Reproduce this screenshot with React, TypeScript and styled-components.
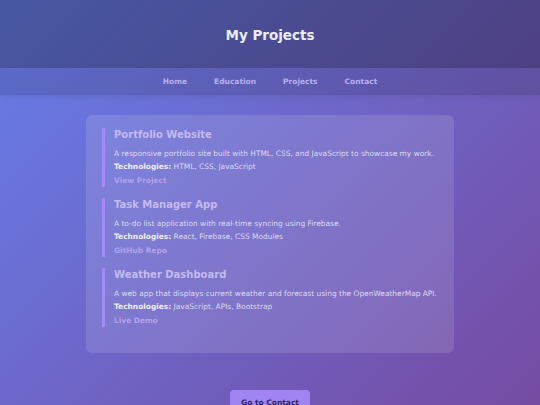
import React from "react";
import styled, { createGlobalStyle } from "styled-components";

const GlobalStyle = createGlobalStyle`
  html, body { margin: 0; padding: 0; }
  body {
    min-height: 405px;
    font-family: "DejaVu Sans", Verdana, sans-serif;
    background: linear-gradient(135deg, #667eea 0%, #764ba2 100%);
    background-attachment: fixed;
    overflow: hidden;
  }
`;

const Page = styled.div`
  width: 540px;
  display: flex;
  flex-direction: column;
`;

const Header = styled.header`
  flex-shrink: 0;
  height: 68px;
  background: rgba(0, 0, 0, 0.3);
  display: flex;
  align-items: center;
  justify-content: center;
`;

const Title = styled.h1`
  margin: 0;
  padding-top: 1px;
  font-size: 13.5px;
  font-weight: 700;
  color: #ececf8;
`;

const Nav = styled.nav`
  flex-shrink: 0;
  height: 27px;
  background: rgba(0, 0, 0, 0.13);
  box-shadow: 0 2px 6px rgba(0, 0, 0, 0.08);
  display: flex;
  align-items: center;
  justify-content: center;
  gap: 27px;
`;

const NavLink = styled.a`
  font-size: 7.5px;
  font-weight: 700;
  color: #b7b0f0;
  text-decoration: none;
`;

const Main = styled.main`
  display: flex;
  flex-direction: column;
  align-items: center;
  padding-top: 20px;
`;

const Card = styled.section`
  width: 368px;
  box-sizing: border-box;
  padding: 13px 10px 15px 16px;
  border-radius: 6px;
  background: rgba(255, 255, 255, 0.12);
`;

const Item = styled.article`
  border-left: 3px solid #a48af4;
  padding-left: 9px;
  margin-bottom: 11px;
`;

const ItemTitle = styled.h2`
  margin: 0;
  font-size: 10px;
  line-height: 13px;
  font-weight: 700;
  color: #c4baf2;
`;

const Text = styled.p`
  margin: 0;
  font-size: 7.45px;
  line-height: 13px;
  color: #dcdaf2;
  white-space: nowrap;
  & strong { color: #f0eefa; }
`;

const Desc = styled(Text)`
  margin-top: 6px;
`;

const ItemLink = styled.a`
  display: block;
  font-size: 7.45px;
  line-height: 13px;
  font-weight: 700;
  color: #b4a2ea;
  text-decoration: none;
  margin-top: 1px;
`;

const Button = styled.button`
  margin-top: 37px;
  width: 80px;
  height: 22px;
  border: none;
  border-radius: 4px;
  background: #a084f2;
  color: #2c2468;
  font-family: "DejaVu Sans", Verdana, sans-serif;
  font-size: 7.5px;
  font-weight: 700;
  display: flex;
  align-items: center;
  justify-content: center;
  padding: 0;
  padding-top: 2px;
`;

const projects = [
  {
    title: "Portfolio Website",
    desc: "A responsive portfolio site built with HTML, CSS, and JavaScript to showcase my work.",
    tech: "HTML, CSS, JavaScript",
    link: "View Project",
  },
  {
    title: "Task Manager App",
    desc: "A to-do list application with real-time syncing using Firebase.",
    tech: "React, Firebase, CSS Modules",
    link: "GitHub Repo",
  },
  {
    title: "Weather Dashboard",
    desc: "A web app that displays current weather and forecast using the OpenWeatherMap API.",
    tech: "JavaScript, APIs, Bootstrap",
    link: "Live Demo",
  },
];

export default function App() {
  return (
    <>
      <GlobalStyle />
      <Page>
        <Header>
          <Title>My Projects</Title>
        </Header>
        <Nav>
          <NavLink href="#">Home</NavLink>
          <NavLink href="#">Education</NavLink>
          <NavLink href="#">Projects</NavLink>
          <NavLink href="#">Contact</NavLink>
        </Nav>
        <Main>
          <Card>
            {projects.map((p) => (
              <Item key={p.title}>
                <ItemTitle>{p.title}</ItemTitle>
                <Desc>{p.desc}</Desc>
                <Text>
                  <strong>Technologies:</strong> {p.tech}
                </Text>
                <ItemLink href="#">{p.link}</ItemLink>
              </Item>
            ))}
          </Card>
          <Button>Go to Contact</Button>
        </Main>
      </Page>
    </>
  );
}
